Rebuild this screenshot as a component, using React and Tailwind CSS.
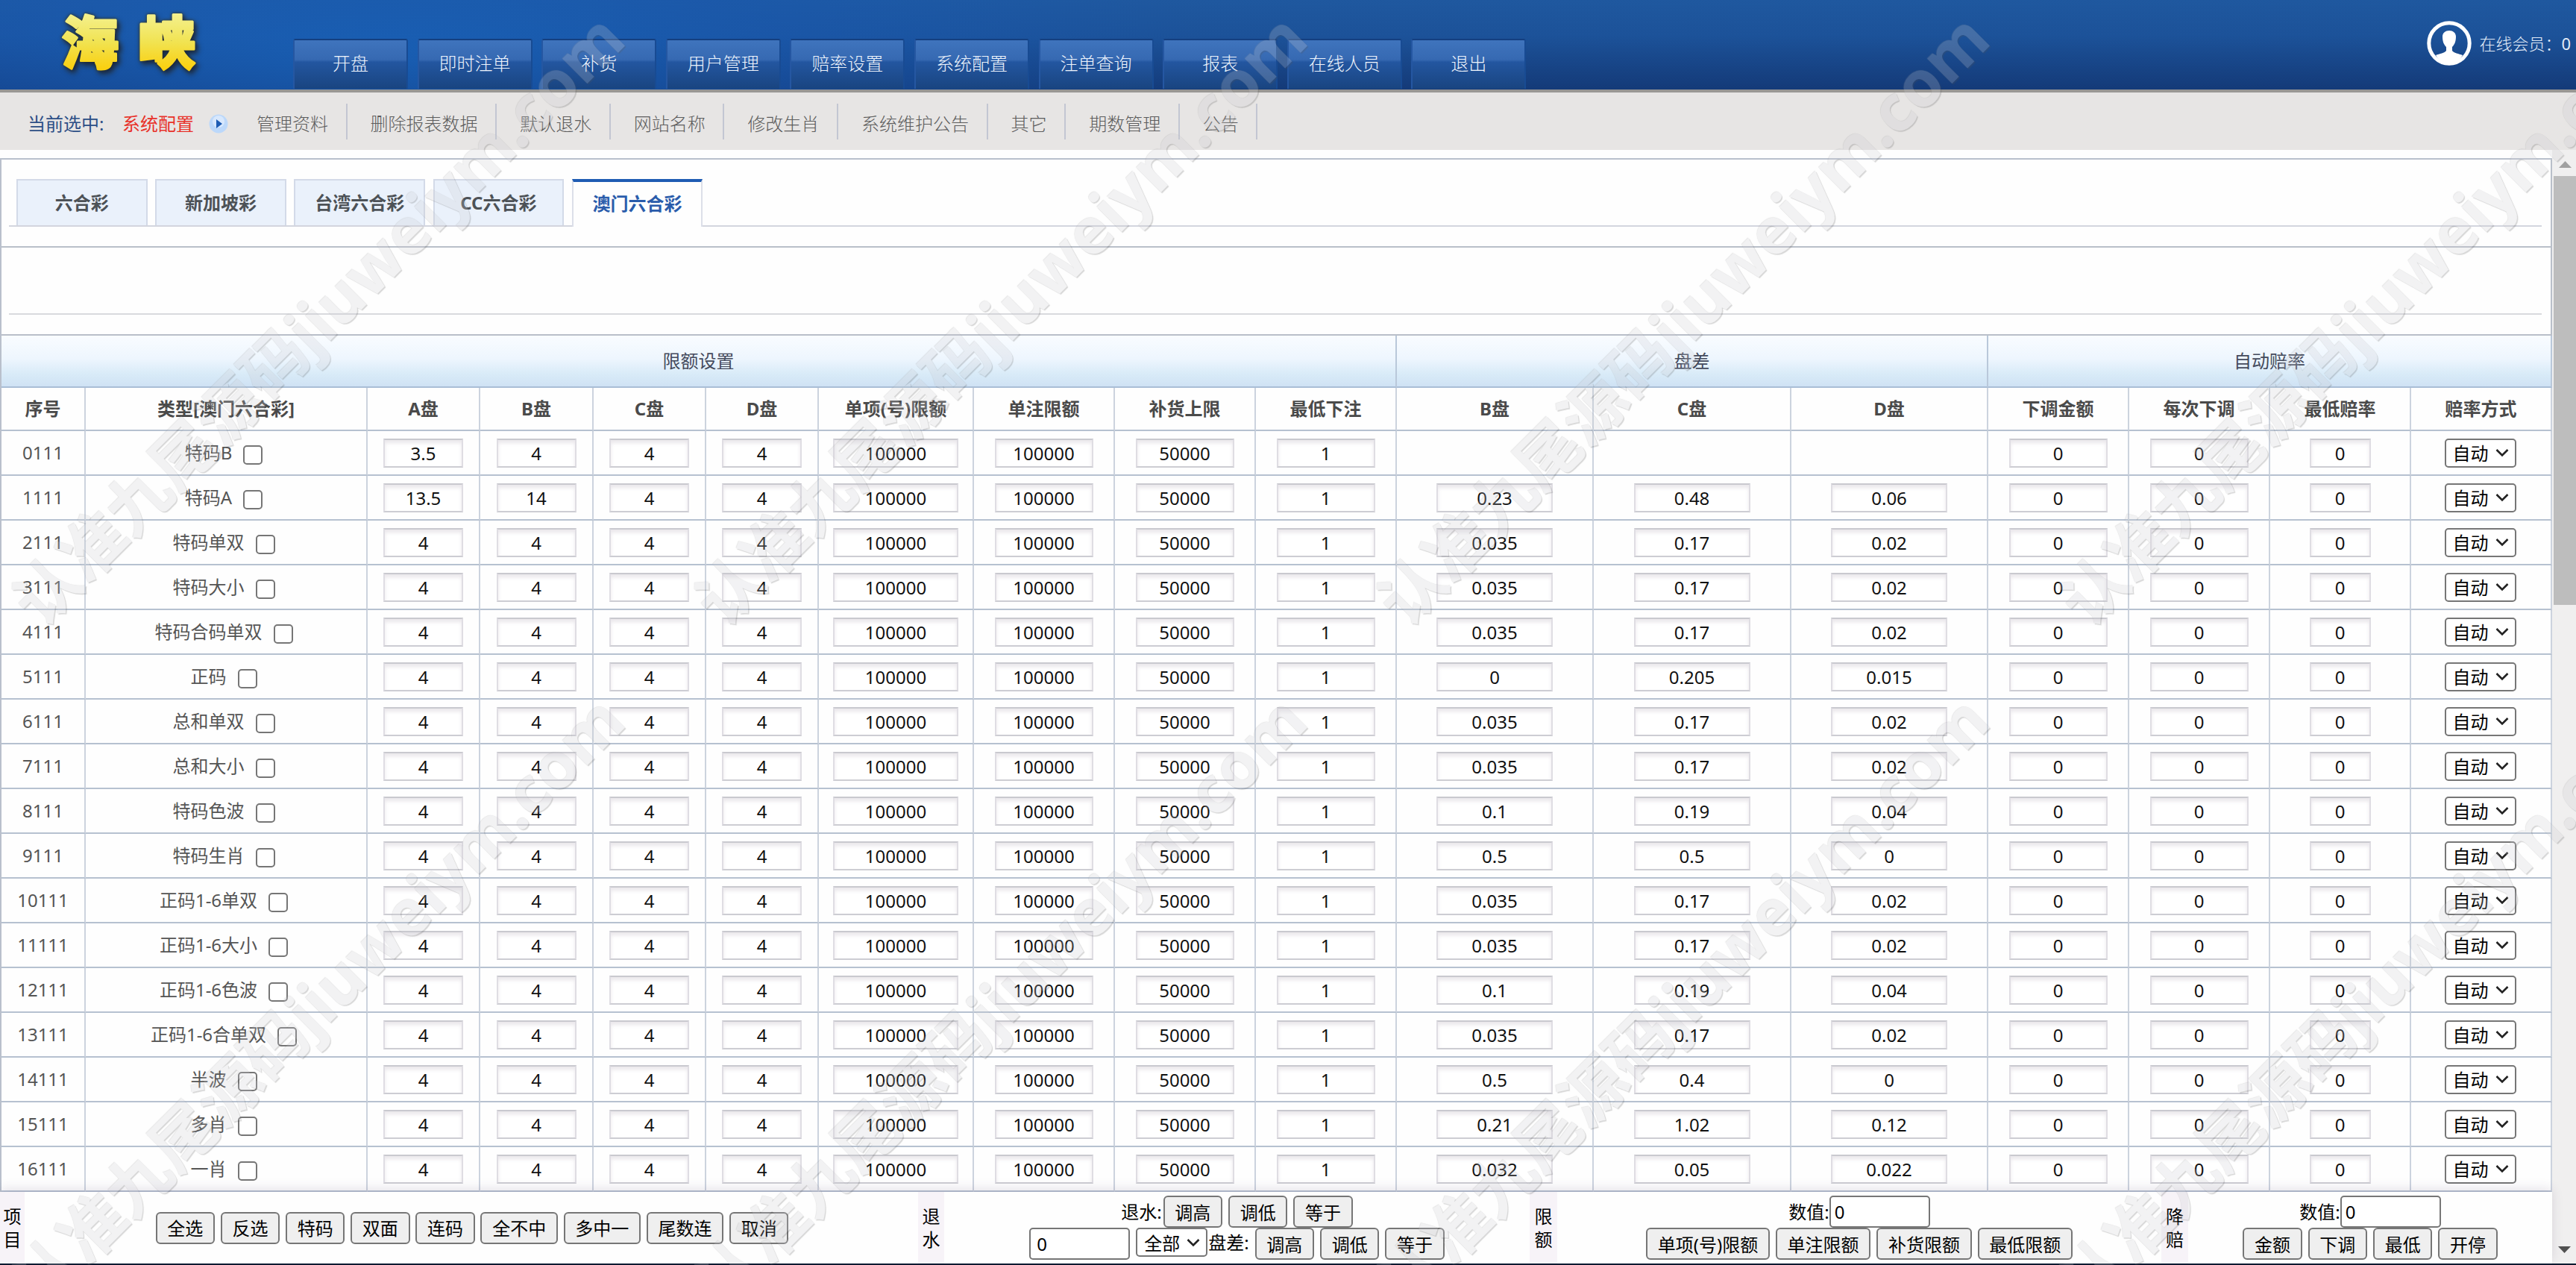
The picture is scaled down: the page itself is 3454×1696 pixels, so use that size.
import React from "react";

const navItems = ["开盘", "即时注单", "补货", "用户管理", "赔率设置", "系统配置", "注单查询", "报表", "在线人员", "退出"];

const subItems = ["管理资料", "删除报表数据", "默认退水", "网站名称", "修改生肖", "系统维护公告", "其它", "期数管理", "公告"];

const tabs = ["六合彩", "新加坡彩", "台湾六合彩", "CC六合彩", "澳门六合彩"];

const heads = [
  "序号", "类型[澳门六合彩]", "A盘", "B盘", "C盘", "D盘", "单项(号)限额", "单注限额", "补货上限",
  "最低下注", "B盘", "C盘", "D盘", "下调金额", "每次下调", "最低赔率", "赔率方式",
];

const colWidths = [
  "w-[113px]", "w-[378px]", "w-[151px]", "w-[152px]", "w-[151px]", "w-[151px]", "w-[208px]", "w-[189px]", "w-[189px]",
  "w-[189px]", "w-[264px]", "w-[265px]", "w-[264px]", "w-[189px]", "w-[189px]", "w-[189px]", "w-[189px]",
];

const rows = [
  { id: "0111", name: "特码B", a: "3.5", b: "4", diff: ["", "", ""] },
  { id: "1111", name: "特码A", a: "13.5", b: "14", diff: ["0.23", "0.48", "0.06"] },
  { id: "2111", name: "特码单双", a: "4", b: "4", diff: ["0.035", "0.17", "0.02"] },
  { id: "3111", name: "特码大小", a: "4", b: "4", diff: ["0.035", "0.17", "0.02"] },
  { id: "4111", name: "特码合码单双", a: "4", b: "4", diff: ["0.035", "0.17", "0.02"] },
  { id: "5111", name: "正码", a: "4", b: "4", diff: ["0", "0.205", "0.015"] },
  { id: "6111", name: "总和单双", a: "4", b: "4", diff: ["0.035", "0.17", "0.02"] },
  { id: "7111", name: "总和大小", a: "4", b: "4", diff: ["0.035", "0.17", "0.02"] },
  { id: "8111", name: "特码色波", a: "4", b: "4", diff: ["0.1", "0.19", "0.04"] },
  { id: "9111", name: "特码生肖", a: "4", b: "4", diff: ["0.5", "0.5", "0"] },
  { id: "10111", name: "正码1-6单双", a: "4", b: "4", diff: ["0.035", "0.17", "0.02"] },
  { id: "11111", name: "正码1-6大小", a: "4", b: "4", diff: ["0.035", "0.17", "0.02"] },
  { id: "12111", name: "正码1-6色波", a: "4", b: "4", diff: ["0.1", "0.19", "0.04"] },
  { id: "13111", name: "正码1-6合单双", a: "4", b: "4", diff: ["0.035", "0.17", "0.02"] },
  { id: "14111", name: "半波", a: "4", b: "4", diff: ["0.5", "0.4", "0"] },
  { id: "15111", name: "多肖", a: "4", b: "4", diff: ["0.21", "1.02", "0.12"] },
  { id: "16111", name: "一肖", a: "4", b: "4", diff: ["0.032", "0.05", "0.022"] },
];

// start point of every watermark line
const marks = [0, 1, 2, 3].flatMap((c) => [0, 1].map((r) => ({ left: 32 + c * 915, top: 767 + r * 914 })));

const Field = ({ value, width }) => (
  <div
    className={`mx-auto flex h-[39px] items-center justify-center border-2 border-x-[#dfdde3] border-t-[#c9c9cf] border-b-[#cdcdd3] bg-white pt-[2px] leading-none text-[#111] shadow-[inset_0_4px_5px_rgba(90,70,100,0.13)] ${width}`}
  >
    {value}
  </div>
);

const Chevron = () => (
  <svg className="h-[12px] w-[18px]" viewBox="0 0 18 12" fill="none" stroke="#222" strokeWidth="2.6">
    <path d="M1.5 2 L9 9.5 L16.5 2" />
  </svg>
);

const Select = ({ label }) => (
  <div className="flex h-[39px] w-[96px] items-center justify-between rounded-[5px] border-2 border-[#767676] bg-white pr-[8px] pl-[9px] leading-none text-black">
    <span className="pt-[2px] whitespace-nowrap">{label}</span>
    <Chevron />
  </div>
);

const Button = ({ children }) => (
  <button className="h-[43px] rounded-[6px] border-2 border-[#767676] bg-[#efefef] px-[13.7px] pt-[2px] leading-none whitespace-nowrap text-black">
    {children}
  </button>
);

const NumberBox = () => (
  <div className="flex h-[43px] w-[135px] items-center rounded-[5px] border-2 border-[#767676] bg-white pl-[5px] leading-none text-black">0</div>
);

const SideLabel = ({ text, width }) => (
  <div className={`flex shrink-0 flex-col items-center justify-center bg-[#f7f3f8] leading-[31px] text-black ${width}`}>
    {text.split("").map((c) => (
      <span key={c}>{c}</span>
    ))}
  </div>
);

const Header = () => (
  <>
    <header className="flex h-[120px] shrink-0 justify-between bg-[radial-gradient(ellipse_1100px_220px_at_520px_75px,rgba(24,100,190,0.75),rgba(24,90,180,0.5)_50%,transparent),linear-gradient(#1f589f,#1c5299_40%,#143a78)]">
      <div className="flex">
        <svg className="h-[120px] w-[393px]" viewBox="0 0 393 120">
          <defs>
            <linearGradient id="gold" gradientUnits="userSpaceOnUse" x1="0" y1="20" x2="0" y2="92">
              <stop offset="0" stopColor="#f4f08c" />
              <stop offset="0.5" stopColor="#f1e352" />
              <stop offset="1" stopColor="#fad010" />
            </linearGradient>
          </defs>
          <g
            className="font-['Noto_Sans_CJK_SC',sans-serif] text-[77px] font-black drop-shadow-[0_0_2px_#3a3410]"
            fill="url(#gold)"
            stroke="url(#gold)"
            strokeWidth="3"
            strokeLinejoin="round"
          >
            <text className="drop-shadow-[3px_4px_3px_rgba(10,28,70,0.65)]" x="82" y="86">海</text>
            <text className="drop-shadow-[3px_4px_3px_rgba(10,28,70,0.65)]" x="185" y="86">峡</text>
          </g>
        </svg>
        <nav className="flex gap-[12.6px] pt-[52px] font-light">
          {navItems.map((item) => (
            <a
              key={item}
              className="flex h-[67px] w-[154px] items-center justify-center rounded-t-[3px] border-2 border-b-0 border-t-[#143f80] border-r-[#184b93] border-l-[#2557a2] bg-[linear-gradient(#3f74bd,#3669b2_40%,#2356a0_45%,#194480)] pb-[4px] text-[#eef4fc]"
            >
              {item}
            </a>
          ))}
        </nav>
      </div>
      <div className="flex items-center gap-[10px] pr-[7px] pb-[5px] font-light text-[#e3ecf8]">
        <svg className="h-[60px] w-[60px]" viewBox="0 0 60 60">
          <circle cx="30" cy="30" r="27.2" fill="none" stroke="#fff" strokeWidth="5" />
          <path d="M12 46 C17 44 24 43 26 40 V35 C22 31 21 26 21 21 C21 16 25 13 30 13 C35 13 39 16 39 21 C39 26 38 31 34 35 V40 C36 43 43 44 48 46 C43 54 37 57 30 57 C23 57 17 54 12 46 Z" fill="#fff" />
        </svg>
        <span className="text-[22px] whitespace-nowrap">在线会员：<span className="font-normal">0</span></span>
      </div>
    </header>
    <div className="h-[4px] shrink-0 bg-[#999794]" />
    <div className="flex h-[77px] shrink-0 items-center bg-[#e7e5e4] pt-[6px] pl-[37px] font-light text-[#5c5c5c]">
      <span className="w-[127px] font-normal whitespace-nowrap text-[#2d4f86]">当前选中:</span>
      <span className="w-[116px] font-normal whitespace-nowrap text-[#e8322a]">系统配置</span>
      <svg className="mr-[7px] h-[26px] w-[26px]" viewBox="0 0 26 26">
        <circle cx="13" cy="13" r="12.5" fill="#bcd8fa" />
        <circle cx="13" cy="10" r="8" fill="#d8e8fd" />
        <path d="M10 7 L18 13 L10 19 Z" fill="#1d5cb4" />
      </svg>
      {subItems.map((item) => (
        <span key={item} className="-mt-[5px] flex h-[48px] items-center border-r-2 border-[#c3c6d2] pt-[5px] pr-[23.6px] pl-[31px] whitespace-nowrap">
          {item}
        </span>
      ))}
    </div>
  </>
);

const LimitTable = () => (
  <table className="w-[3420px] table-fixed border-separate border-spacing-0 text-center">
    <colgroup>
      {colWidths.map((w, i) => (
        <col key={i} className={w} />
      ))}
    </colgroup>
    <thead>
      <tr className="h-[70px] text-[#444a5c]">
        {[["限额设置", 10], ["盘差", 3], ["自动赔率", 4]].map(([title, span]) => (
          <th key={title} colSpan={span} className="border-r-2 border-b-2 border-r-[#b9c8da] border-b-[#a9bed6] bg-[linear-gradient(#f9fcff,#eef6fe_45%,#d9ebf8_75%,#cfe2f4)] p-0 font-normal">
            {title}
          </th>
        ))}
      </tr>
      <tr className="h-[58px] text-[#4a4a4a]">
        {heads.map((h, i) => (
          <th key={i} className="border-r-2 border-b-2 border-r-[#ccd3de] border-b-[#b6c1d0] p-0 font-bold whitespace-nowrap">{h}</th>
        ))}
      </tr>
    </thead>
    <tbody>
      {rows.map((row) => (
        <tr key={row.id} className="h-[60px] text-[#555] [&>td]:border-r-2 [&>td]:border-b-2 [&>td]:border-r-[#ccd3de] [&>td]:border-b-[#b6c1d0] [&>td]:p-0">
          <td>{row.id}</td>
          <td>
            <div className="flex items-center justify-center gap-[15px] pr-[6px]">
              <span>{row.name}</span>
              <span className="mt-[5px] h-[26px] w-[26px] rounded-[5px] border-2 border-[#767676] bg-white" />
            </div>
          </td>
          <td><Field value={row.a} width="w-[107px]" /></td>
          <td><Field value={row.b} width="w-[107px]" /></td>
          <td><Field value="4" width="w-[107px]" /></td>
          <td><Field value="4" width="w-[107px]" /></td>
          <td><Field value="100000" width="w-[168px]" /></td>
          <td><Field value="100000" width="w-[132px]" /></td>
          <td><Field value="50000" width="w-[132px]" /></td>
          <td><Field value="1" width="w-[132px]" /></td>
          {row.diff.map((d, i) => (
            <td key={i}>{d && <Field value={d} width="w-[156px]" />}</td>
          ))}
          <td><Field value="0" width="w-[132px]" /></td>
          <td><Field value="0" width="w-[132px]" /></td>
          <td><Field value="0" width="w-[82px]" /></td>
          <td><div className="flex justify-center pr-[2px]"><Select label="自动" /></div></td>
        </tr>
      ))}
    </tbody>
  </table>
);

const Footer = () => (
  <footer className="relative flex h-[96px] shrink-0 bg-[#fefefe] text-black shadow-[0_-4px_14px_rgba(70,50,100,0.14)]">
    <SideLabel text="项目" width="w-[33px]" />
    <div className="flex w-[1198px] items-center justify-center gap-[7.8px] pl-[2px]">
      {["全选", "反选", "特码", "双面", "连码", "全不中", "多中一", "尾数连", "取消"].map((b) => (
        <Button key={b}>{b}</Button>
      ))}
    </div>
    <SideLabel text="退水" width="w-[35px]" />
    <div className="flex w-[785px] flex-col items-center pt-[5px]">
      <div className="flex items-center gap-[8px]">
        <span className="-mr-[6px] whitespace-nowrap">退水:</span>
        <Button>调高</Button>
        <Button>调低</Button>
        <Button>等于</Button>
      </div>
      <div className="flex items-start gap-[8px]">
        <div className="flex h-[43px] w-[135px] items-center rounded-[5px] border-2 border-[#767676] bg-white pl-[8px] leading-none">0</div>
        <Select label="全部" />
        <span className="-ml-[7px] self-center pb-[4px] whitespace-nowrap">盘差:</span>
        <Button>调高</Button>
        <Button>调低</Button>
        <Button>等于</Button>
      </div>
    </div>
    <SideLabel text="限额" width="w-[37px]" />
    <div className="flex w-[810px] flex-col items-center pt-[5px]">
      <div className="flex items-center">
        <span className="whitespace-nowrap">数值:</span>
        <NumberBox />
      </div>
      <div className="flex gap-[8px]">
        <Button>单项(号)限额</Button>
        <Button>单注限额</Button>
        <Button>补货限额</Button>
        <Button>最低限额</Button>
      </div>
    </div>
    <SideLabel text="降赔" width="w-[36px]" />
    <div className="flex grow flex-col items-center pt-[5px]">
      <div className="flex items-center">
        <span className="whitespace-nowrap">数值:</span>
        <NumberBox />
      </div>
      <div className="flex gap-[8px]">
        <Button>金额</Button>
        <Button>下调</Button>
        <Button>最低</Button>
        <Button>开停</Button>
      </div>
    </div>
  </footer>
);

const App = () => {
  return (
    <div className="relative flex h-[1696px] w-[3454px] flex-col overflow-hidden bg-[#fefefe] font-['Noto_Sans','Noto_Sans_CJK_SC',sans-serif] text-[24px] leading-[32px]">
      <Header />
      <div className="flex h-[1493px] shrink-0">
        <div className="flex w-[3422px] flex-col pt-[11px]">
          <div className="h-[1386px] overflow-hidden border-t-2 border-l-2 border-[#b9c0cc]">
            <div className="h-[118px] border-r-2 border-b-2 border-[#b9bfc9] pt-[26px] pr-[12px] pl-[10px]">
              <div className="flex h-[64px] gap-[10.6px] border-b-2 border-[#d3d5de] pl-[10px]">
                {tabs.map((tab, i) => (
                  <div
                    key={tab}
                    className={
                      i === 4
                        ? "flex h-[64px] w-[175.6px] items-center justify-center border-x-2 border-t-[4px] border-x-[#dcdfe9] border-t-[#1f5cb3] bg-[#fefefe] pb-[2px] font-bold text-[#2a5cab]"
                        : "flex h-[62px] w-[175.6px] items-center justify-center border-2 border-b-0 border-[#d3dae8] bg-[#eaf1fb] font-bold text-[#4d5257]"
                    }
                  >
                    {tab}
                  </div>
                ))}
              </div>
            </div>
            <div className="h-[118px] border-r-2 border-b-2 border-[#b9bfc9] pr-[12px] pl-[10px]">
              <div className="h-[90px] border-b-2 border-[#d9dade]" />
            </div>
            <LimitTable />
          </div>
          <Footer />
        </div>
        <div className="flex w-[32px] flex-col items-center justify-between bg-[#f0efef] pb-[14px]">
          <div className="flex w-full flex-col items-center pt-[15px] pl-[2px]">
            <svg className="h-[9px] w-[17px]" viewBox="0 0 17 9"><path d="M0 9 L8.5 0 L17 9 Z" fill="#a0a0a0" /></svg>
            <div className="mt-[11px] h-[575px] w-full bg-[#bdbdbd]" />
          </div>
          <svg className="h-[9px] w-[17px]" viewBox="0 0 17 9"><path d="M0 0 L8.5 9 L17 0 Z" fill="#505050" /></svg>
        </div>
      </div>
      <div className="h-[2px] shrink-0 bg-[#0a1a30]" />
      <div className="pointer-events-none absolute inset-0 overflow-hidden">
        {marks.map((m, i) => (
          <span
            key={i}
            className="absolute origin-left -rotate-45 text-[86px] leading-[108px] font-bold whitespace-nowrap text-[#cbcbd1] opacity-[0.23] [text-shadow:0_2px_1px_#555,0_-1px_1px_#999]"
            style={m}
          >
            认准九尾源码jiuweiym.com
          </span>
        ))}
      </div>
    </div>
  );
};

export default App;
